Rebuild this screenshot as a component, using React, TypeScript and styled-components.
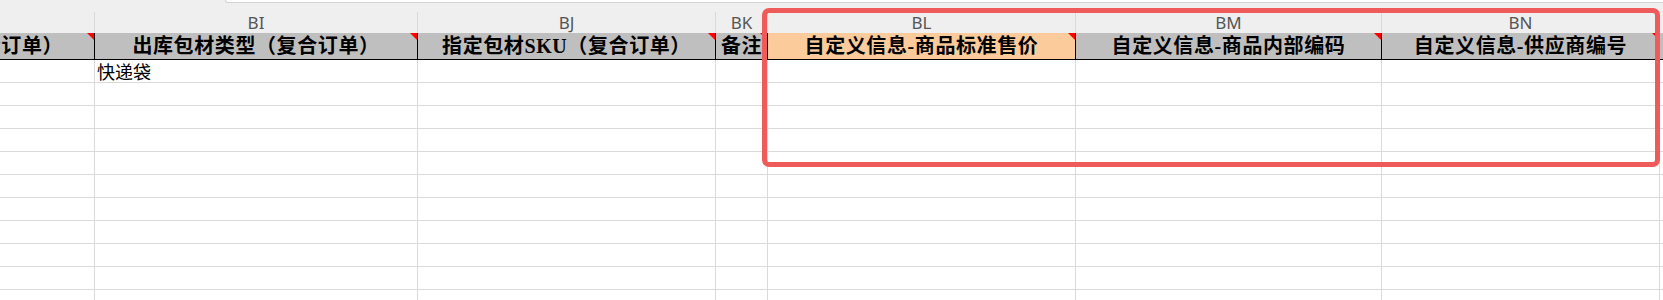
import React from 'react';
import styled, { createGlobalStyle } from 'styled-components';

const GlobalStyle = createGlobalStyle`
  html, body {
    margin: 0;
    padding: 0;
    background: #ffffff;
    overflow: hidden;
  }
`;

const Sheet = styled.div`
  position: relative;
  width: 1663px;
  height: 300px;
  overflow: hidden;
  background: #ffffff;
`;

const TopStrip = styled.div`
  height: 12px;
  background: #efefef;
`;

const FormulaEdge = styled.div`
  margin-left: 225px;
  height: 2px;
  background: #ffffff;
  border-left: 1px solid #d4d4d4;
  border-bottom: 1px solid #d4d4d4;
  border-bottom-left-radius: 4px;
`;

const Grid = styled.div`
  display: grid;
  grid-template-columns: 310px 323px 298px 52px 308px 306px 278px 120px;
  margin-left: -215px;
`;

const LetterCell = styled.div`
  box-sizing: border-box;
  height: 21px;
  background: #efefef;
  border-right: 1px solid #d9d9d9;
  display: flex;
  align-items: center;
  justify-content: center;
  font-family: 'Noto Sans', 'Liberation Sans', sans-serif;
  font-size: 17px;
  color: #555555;
  line-height: 1;
`;

const HeaderCell = styled.div<{ $accent?: boolean }>`
  position: relative;
  box-sizing: border-box;
  height: 27px;
  background: ${(p) => (p.$accent ? '#fbcb9c' : '#bfbfbf')};
  border-right: 1px solid #000000;
  border-bottom: 1px solid #000000;
  display: flex;
  align-items: center;
  justify-content: center;
  white-space: nowrap;
  overflow: hidden;
  font-family: 'Liberation Serif', 'Noto Sans CJK SC', serif;
  font-weight: 700;
  font-size: 20px;
  letter-spacing: 0.6px;
  color: #000000;
  line-height: 1;

  &::after {
    content: '';
    position: absolute;
    top: 0;
    right: 0;
    border-top: 7px solid #ff0000;
    border-left: 7px solid transparent;
  }
`;

const DataCell = styled.div`
  box-sizing: border-box;
  height: 23px;
  border-right: 1px solid #dadada;
  border-bottom: 1px solid #dadada;
  display: flex;
  align-items: center;
  padding-left: 2px;
  white-space: nowrap;
  font-family: 'Noto Sans CJK SC', 'Noto Sans', sans-serif;
  font-size: 18px;
  color: #000000;
  line-height: 1;
`;

const Highlight = styled.div`
  position: absolute;
  left: 762px;
  top: 8px;
  width: 898px;
  height: 159px;
  box-sizing: border-box;
  border: 5px solid #ef5b5b;
  border-radius: 7px;
  pointer-events: none;
`;

// the first and last columns are only partly on screen, so their letters are not shown
const columns = [
  { letter: '', title: '出库包材数量（复合订单）' },
  { letter: 'BI', title: '出库包材类型（复合订单）' },
  { letter: 'BJ', title: '指定包材SKU（复合订单）' },
  { letter: 'BK', title: '备注' },
  { letter: 'BL', title: '自定义信息-商品标准售价', accent: true },
  { letter: 'BM', title: '自定义信息-商品内部编码' },
  { letter: 'BN', title: '自定义信息-供应商编号' },
  { letter: '', title: '' },
];

const rows: string[][] = Array.from({ length: 11 }, (_, r) =>
  columns.map((_, c) => (r === 0 && c === 1 ? '快递袋' : ''))
);

export default function App() {
  return (
    <>
      <GlobalStyle />
      <Sheet>
        <TopStrip>
          <FormulaEdge />
        </TopStrip>
        <Grid>
          {columns.map((col, i) => (
            <LetterCell key={'l' + i}>{col.letter}</LetterCell>
          ))}
          {columns.map((col, i) => (
            <HeaderCell key={'h' + i} $accent={col.accent}>
              {col.title}
            </HeaderCell>
          ))}
          {rows.map((row, r) =>
            row.map((text, c) => <DataCell key={r + '-' + c}>{text}</DataCell>)
          )}
        </Grid>
        <Highlight />
      </Sheet>
    </>
  );
}
